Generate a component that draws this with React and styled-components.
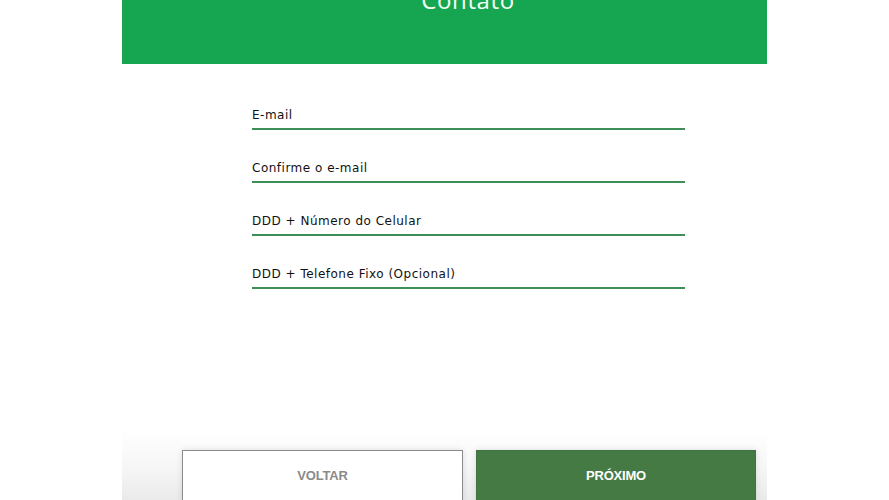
import React from "react";
import styled, { createGlobalStyle } from "styled-components";

const Global = createGlobalStyle`
  html, body { margin: 0; padding: 0; background: #fff; }
  body { overflow: hidden; }
  * { box-sizing: border-box; }
`;

const Page = styled.div`
  width: 645px;
  margin: 0 auto;
  display: flex;
  flex-direction: column;
`;

const Header = styled.header`
  height: 64px;
  background: #16a651;
  display: flex;
  justify-content: center;
  padding-left: 47px;
  overflow: hidden;
`;

const Title = styled.h1`
  margin: -16px 0 0;
  font-family: "Open Sans", sans-serif;
  font-weight: 500;
  font-size: 24px;
  line-height: 32px;
  color: #f2fff4;
  letter-spacing: 0.6px;
`;

const Form = styled.form`
  margin: 13px 0 0 130px;
  width: 433px;
  display: flex;
  flex-direction: column;
`;

const Field = styled.label`
  height: 53px;
  padding-bottom: 4px;
  border-bottom: 2px solid #3d8f57;
  display: flex;
  align-items: flex-end;
`;

const LabelText = styled.span`
  font-family: "DejaVu Sans", sans-serif;
  font-size: 12px;
  line-height: 18px;
  color: #111;
  letter-spacing: 0.5px;
`;

const Footer = styled.footer`
  margin-top: 141px;
  height: 70px;
  padding: 20px 11px 0 60px;
  background: linear-gradient(#ffffff 0%, #f7f7f7 50%, #eaeaea 100%);
  display: flex;
  gap: 13px;
  align-items: flex-start;
`;

const Button = styled.button`
  width: ${(p) => p.$w}px;
  height: 52px;
  font-family: "Liberation Sans", Arial, sans-serif;
  font-weight: 700;
  font-size: 13px;
  letter-spacing: -0.2px;
  cursor: pointer;
  box-shadow: 0 0 6px rgba(0, 0, 0, 0.12);
  border: 1px solid ${(p) => (p.$primary ? "#3f7340" : "#8c8c8c")};
  background: ${(p) => (p.$primary ? "#467a44" : "#fff")};
  color: ${(p) => (p.$primary ? "#fff" : "#8a8a8a")};
  padding: 0 0 2px;
`;

const fields = [
  "E-mail",
  "Confirme o e-mail",
  "DDD + Número do Celular",
  "DDD + Telefone Fixo (Opcional)",
];

export default function App() {
  return (
    <>
      <Global />
      <Page>
        <Header>
          <Title>Contato</Title>
        </Header>
        <Form onSubmit={(e) => e.preventDefault()}>
          {fields.map((f) => (
            <Field key={f}>
              <LabelText>{f}</LabelText>
            </Field>
          ))}
        </Form>
        <Footer>
          <Button type="button" $w={281}>VOLTAR</Button>
          <Button type="button" $w={280} $primary>PRÓXIMO</Button>
        </Footer>
      </Page>
    </>
  );
}
